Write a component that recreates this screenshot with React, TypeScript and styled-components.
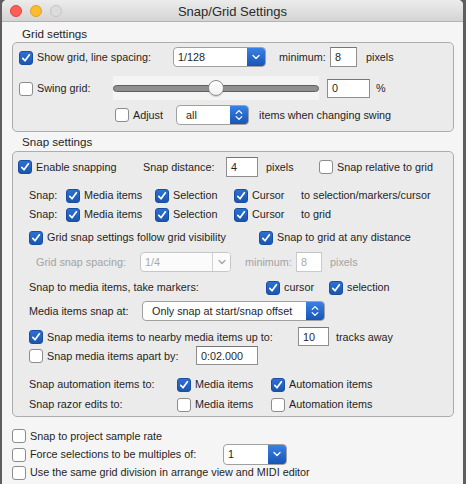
import React from "react";
import styled, { createGlobalStyle, css } from "styled-components";

const GlobalStyle = createGlobalStyle`
  html, body {
    margin: 0;
    padding: 0;
    background: #5e5e5e;
  }
  body {
    font-family: "Liberation Sans", Arial, sans-serif;
    font-size: 10.8px;
    color: #1f1f1f;
  }
  * { box-sizing: border-box; }
`;

const Window = styled.div`
  width: 461px;
  height: 484px;
  margin-left: 2px;
  background: #f5f5f5;
  border-radius: 5px 5px 0 0;
  overflow: hidden;
  display: flex;
  flex-direction: column;
`;

const TitleBar = styled.div`
  height: 22px;
  flex-shrink: 0;
  display: grid;
  grid-template-columns: 1fr auto 1fr;
  align-items: center;
  background: linear-gradient(#ececec, #d4d4d4);
  border-bottom: 1px solid #b3b3b3;
`;

const Lights = styled.div`
  display: flex;
  gap: 8px;
  padding-left: 8px;
`;

const Light = styled.span<{ $fill: string; $ring: string }>`
  width: 12px;
  height: 12px;
  border-radius: 50%;
  background: ${(p) => p.$fill};
  border: 1px solid ${(p) => p.$ring};
`;

const Title = styled.div`
  font-size: 13px;
  color: #2a2a2a;
  padding-top: 1px;
`;

const Body = styled.div`
  flex: 1;
  display: flex;
  flex-direction: column;
  padding: 5px 9px 0 10px;
`;

const SectionLabel = styled.div<{ $mt?: number }>`
  font-size: 11.6px;
  line-height: 14px;
  height: 14px;
  padding-left: 10px;
  margin-top: ${(p) => p.$mt ?? 0}px;
  color: #1f1f1f;
`;

const GroupBox = styled.div<{ $mt: number; $pb: number }>`
  margin-top: ${(p) => p.$mt}px;
  padding-bottom: ${(p) => p.$pb}px;
  background: #ebebeb;
  border: 1px solid #acacac;
  border-radius: 5px;
  display: flex;
  flex-direction: column;
`;

const Row = styled.div<{ $h: number; $mt?: number; $pl?: number }>`
  display: flex;
  align-items: center;
  height: ${(p) => p.$h}px;
  margin-top: ${(p) => p.$mt ?? 0}px;
  padding-left: ${(p) => p.$pl ?? 0}px;
  white-space: nowrap;
`;

const Text = styled.span<{ $w?: number; $ml?: number; $disabled?: boolean }>`
  flex-shrink: 0;
  ${(p) => (p.$w ? `width: ${p.$w}px;` : "")}
  margin-left: ${(p) => p.$ml ?? 0}px;
  color: ${(p) => (p.$disabled ? "#a3a3a3" : "#1f1f1f")};
`;

const Item = styled.label<{ $w?: number; $ml?: number }>`
  display: flex;
  align-items: center;
  gap: 4px;
  flex-shrink: 0;
  ${(p) => (p.$w ? `width: ${p.$w}px;` : "")}
  margin-left: ${(p) => p.$ml ?? 0}px;
`;

const Box = styled.span<{ $on: boolean }>`
  width: 14px;
  height: 14px;
  flex-shrink: 0;
  border-radius: 3px;
  margin-top: 1px;
  display: flex;
  align-items: center;
  justify-content: center;
  ${(p) =>
    p.$on
      ? css`
          background: linear-gradient(#2d70d2, #1a56b0);
          border: 1px solid #1a4f9f;
        `
      : css`
          background: #ffffff;
          border: 1px solid #8c8c8c;
        `}
`;

const Tick = () => (
  <svg width="10" height="10" viewBox="0 0 10 10">
    <path
      d="M1.8 5.4 L4 7.8 L8.4 1.8"
      fill="none"
      stroke="#ffffff"
      strokeWidth="1.7"
      strokeLinecap="round"
      strokeLinejoin="round"
    />
  </svg>
);

const Check = ({
  on = false,
  label,
  w,
  ml,
}: {
  on?: boolean;
  label: string;
  w?: number;
  ml?: number;
}) => (
  <Item $w={w} $ml={ml}>
    <Box $on={on}>{on && <Tick />}</Box>
    <span>{label}</span>
  </Item>
);

const Combo = styled.div<{ $w: number; $h?: number; $ml?: number; $disabled?: boolean }>`
  display: flex;
  flex-shrink: 0;
  width: ${(p) => p.$w}px;
  height: ${(p) => p.$h ?? 20}px;
  margin-left: ${(p) => p.$ml ?? 0}px;
  background: ${(p) => (p.$disabled ? "#fbfbfb" : "#ffffff")};
  border: 1px solid ${(p) => (p.$disabled ? "#c6c6c6" : "#a0a0a0")};
  border-radius: 4px;
  overflow: hidden;
`;

const ComboValue = styled.span<{ $pad: number; $disabled?: boolean }>`
  flex: 1;
  display: flex;
  align-items: center;
  padding-left: ${(p) => p.$pad}px;
  color: ${(p) => (p.$disabled ? "#a8a8a8" : "#1f1f1f")};
`;

const ArrowButton = styled.span<{ $disabled?: boolean }>`
  width: 18px;
  flex-shrink: 0;
  display: flex;
  align-items: center;
  justify-content: center;
  ${(p) =>
    p.$disabled
      ? css`
          border-left: 1px solid #d0d0d0;
          background: #fbfbfb;
        `
      : css`
          background: linear-gradient(#3a80e6, #1656b6);
        `}
`;

const ChevronDown = ({ color }: { color: string }) => (
  <svg width="8" height="6" viewBox="0 0 8 6">
    <path d="M1 1.5 L4 4.5 L7 1.5" fill="none" stroke={color} strokeWidth="1.4" strokeLinecap="round" strokeLinejoin="round" />
  </svg>
);

const ChevronUpDown = () => (
  <svg width="8" height="12" viewBox="0 0 8 12">
    <path d="M1.2 4.4 L4 1.6 L6.8 4.4" fill="none" stroke="#fff" strokeWidth="1.3" strokeLinecap="round" strokeLinejoin="round" />
    <path d="M1.2 7.6 L4 10.4 L6.8 7.6" fill="none" stroke="#fff" strokeWidth="1.3" strokeLinecap="round" strokeLinejoin="round" />
  </svg>
);

const PullDown = ({
  value,
  w,
  h,
  ml,
  disabled,
}: {
  value: string;
  w: number;
  h?: number;
  ml?: number;
  disabled?: boolean;
}) => (
  <Combo $w={w} $h={h} $ml={ml} $disabled={disabled}>
    <ComboValue $pad={4} $disabled={disabled}>{value}</ComboValue>
    <ArrowButton $disabled={disabled}>
      <ChevronDown color={disabled ? "#a8a8a8" : "#ffffff"} />
    </ArrowButton>
  </Combo>
);

const PopUp = ({ value, w, ml }: { value: string; w: number; ml?: number }) => (
  <Combo $w={w} $ml={ml}>
    <ComboValue $pad={9}>{value}</ComboValue>
    <ArrowButton>
      <ChevronUpDown />
    </ArrowButton>
  </Combo>
);

const Field = styled.div<{ $w: number; $h: number; $ml?: number; $disabled?: boolean }>`
  flex-shrink: 0;
  width: ${(p) => p.$w}px;
  height: ${(p) => p.$h}px;
  margin-left: ${(p) => p.$ml ?? 0}px;
  display: flex;
  align-items: center;
  padding-left: 4px;
  background: #ffffff;
  border: 1px solid ${(p) => (p.$disabled ? "#cacaca" : "#8e8e8e")};
  border-top-color: ${(p) => (p.$disabled ? "#c2c2c2" : "#767676")};
  color: ${(p) => (p.$disabled ? "#a8a8a8" : "#1f1f1f")};
`;

const SliderWell = styled.div`
  position: relative;
  flex-shrink: 0;
  width: 206px;
  height: 24px;
  display: flex;
  align-items: center;
  background: #f4f4f4;
`;

const Track = styled.div`
  width: 100%;
  height: 7px;
  border-radius: 4px;
  background: #8f8f8f;
  border: 1px solid #5f5f5f;
`;

const Thumb = styled.div`
  position: absolute;
  top: 4px;
  width: 16px;
  height: 16px;
  margin-left: -8px;
  border-radius: 50%;
  background: linear-gradient(#ffffff, #f2f2f2);
  border: 1px solid #8a8a8a;
  box-shadow: 0 1px 1px rgba(0, 0, 0, 0.15);
`;

const Slider = ({ value }: { value: number }) => (
  <SliderWell>
    <Track />
    <Thumb style={{ left: `${value * 100}%` }} />
  </SliderWell>
);

const snapTargets = ["to selection/markers/cursor", "to grid"];

export default function App() {
  return (
    <>
      <GlobalStyle />
      <Window>
        <TitleBar>
          <Lights>
            <Light $fill="#fc5f57" $ring="#e0443e" />
            <Light $fill="#fdbc2e" $ring="#dea123" />
            <Light $fill="#dcdcdc" $ring="#c4c4c4" />
          </Lights>
          <Title>Snap/Grid Settings</Title>
          <span />
        </TitleBar>

        <Body>
          <SectionLabel>Grid settings</SectionLabel>
          <GroupBox $mt={1} $pb={6}>
            <Row $h={22} $mt={3} $pl={6}>
              <Check on label="Show grid, line spacing:" w={154} />
              <PullDown value="1/128" w={93} />
              <Text $ml={13} $w={51}>minimum:</Text>
              <Field $w={27} $h={20}>8</Field>
              <Text $ml={9}>pixels</Text>
            </Row>
            <Row $h={20} $mt={10} $pl={6}>
              <Check label="Swing grid:" w={94} />
              <Slider value={0.5} />
              <Field $w={43} $h={19} $ml={8}>0</Field>
              <Text $ml={6}>%</Text>
            </Row>
            <Row $h={21} $mt={6} $pl={6}>
              <Check label="Adjust" w={61} ml={96} />
              <PopUp value="all" w={73} />
              <Text $ml={10}>items when changing swing</Text>
            </Row>
          </GroupBox>

          <SectionLabel $mt={3}>Snap settings</SectionLabel>
          <GroupBox $mt={2} $pb={3}>
            <Row $h={21} $mt={4} $pl={5}>
              <Check on label="Enable snapping" w={125} />
              <Text $w={83}>Snap distance:</Text>
              <Field $w={32} $h={20}>4</Field>
              <Text $ml={8} $w={53}>pixels</Text>
              <Check label="Snap relative to grid" />
            </Row>
            {snapTargets.map((target, i) => (
              <Row key={target} $h={18} $mt={i === 0 ? 9 : 1} $pl={16}>
                <Text $w={37}>Snap:</Text>
                <Check on label="Media items" w={89} />
                <Check on label="Selection" w={79} />
                <Check on label="Cursor" w={67} />
                <Text>{target}</Text>
              </Row>
            ))}
            <Row $h={18} $mt={5} $pl={16}>
              <Check on label="Grid snap settings follow grid visibility" w={230} />
              <Check on label="Snap to grid at any distance" />
            </Row>
            <Row $h={20} $mt={6} $pl={23}>
              <Text $disabled $w={104}>Grid snap spacing:</Text>
              <PullDown value="1/4" w={91} disabled />
              <Text $disabled $ml={14} $w={51}>minimum:</Text>
              <Field $disabled $w={26} $h={20}>8</Field>
              <Text $disabled $ml={8}>pixels</Text>
            </Row>
            <Row $h={18} $mt={6} $pl={16}>
              <Text $w={237}>Snap to media items, take markers:</Text>
              <Check on label="cursor" w={63} />
              <Check on label="selection" />
            </Row>
            <Row $h={20} $mt={5} $pl={16}>
              <Text $w={113}>Media items snap at:</Text>
              <PopUp value="Only snap at start/snap offset" w={183} />
            </Row>
            <Row $h={19} $mt={6} $pl={16}>
              <Check on label="Snap media items to nearby media items up to:" w={269} />
              <Field $w={31} $h={19}>10</Field>
              <Text $ml={7}>tracks away</Text>
            </Row>
            <Row $h={19} $pl={16}>
              <Check label="Snap media items apart by:" w={167} />
              <Field $w={62} $h={19}>0:02.000</Field>
            </Row>
            <Row $h={18} $mt={10} $pl={16}>
              <Text $w={148}>Snap automation items to:</Text>
              <Check on label="Media items" w={94} />
              <Check on label="Automation items" />
            </Row>
            <Row $h={18} $mt={2} $pl={16}>
              <Text $w={148}>Snap razor edits to:</Text>
              <Check label="Media items" w={94} />
              <Check label="Automation items" />
            </Row>
          </GroupBox>

          <Row $h={19} $mt={9}>
            <Check label="Snap to project sample rate" />
          </Row>
          <Row $h={18}>
            <Check label="Force selections to be multiples of:" w={211} />
            <PullDown value="1" w={64} h={21} />
          </Row>
          <Row $h={18}>
            <Check label="Use the same grid division in arrange view and MIDI editor" />
          </Row>
        </Body>
      </Window>
    </>
  );
}
